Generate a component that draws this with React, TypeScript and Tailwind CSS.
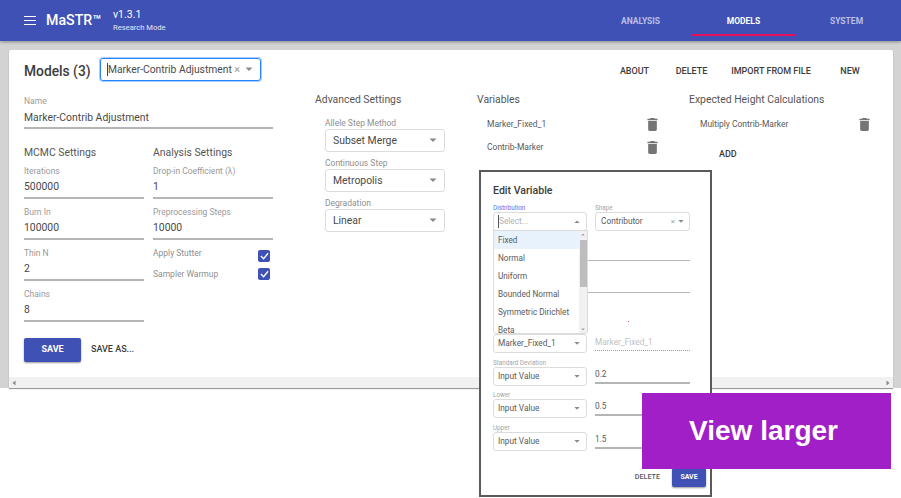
import React from "react";

const Caret = ({ up = false, className = "" }: { up?: boolean; className?: string }) => (
  <svg width="8" height="5" viewBox="0 0 8 5" className={className}>
    <path d={up ? "M0.5 4.5 L4 1 L7.5 4.5 Z" : "M0.5 0.5 L4 4 L7.5 0.5 Z"} fill="#8a8a8a" />
  </svg>
);

const Trash = () => (
  <svg width="11" height="13" viewBox="5 3 14 18" className="shrink-0">
    <path d="M6 19c0 1.1.9 2 2 2h8c1.1 0 2-.9 2-2V7H6v12zM19 4h-3.5l-1-1h-5l-1 1H5v2h14V4z" fill="#757575" />
  </svg>
);

const Field = ({ label, value, className = "" }: { label: string; value: string; className?: string }) => (
  <div className={`flex h-[33px] flex-col border-b-2 border-[#b5b5b5] ${className}`}>
    <span className="text-[8.5px] leading-[11px] text-[#9a9a9a]">{label}</span>
    <span className="mt-[3.5px] text-[10.4px] leading-[14px] text-[#4a4a4a]">{value}</span>
  </div>
);

const AdvSelect = ({ label, value }: { label: string; value: string }) => (
  <div className="mb-[6px] ml-[10px] w-[120px]">
    <div className="text-[8.5px] leading-[11px] text-[#8f8f8f]">{label}</div>
    <div className="flex h-[23px] items-center justify-between rounded-[3px] border border-[#dcdcdc] pl-[7px] pr-[7px] text-[10.4px] text-[#4a4a4a]">
      <span>{value}</span>
      <Caret />
    </div>
  </div>
);

const Check = ({ label, labelClass = "" }: { label: string; labelClass?: string }) => (
  <div className="flex h-[18px] items-center justify-between pr-[3px]">
    <span className={`text-[8.5px] text-[#8f8f8f] ${labelClass}`}>{label}</span>
    <span className="flex h-[12px] w-[12px] items-center justify-center rounded-[2px] bg-[#3f51b5]">
      <svg width="9" height="8" viewBox="0 0 10 8">
        <path d="M1 4 L4 7 L9 1" stroke="white" strokeWidth="1.5" fill="none" />
      </svg>
    </span>
  </div>
);

const ModalSelect = ({ value, muted = false, up = false }: { value: string; muted?: boolean; up?: boolean }) => (
  <div className="flex h-[19px] w-[94px] items-center justify-between rounded-[3px] border border-[#dcdcdc] pl-[4px] pr-[5px] text-[8.3px] text-[#5a5a5a]">
    <span className={muted ? "border-l border-[#555] text-[#b0b0b0]" : ""}>{value}</span>
    <Caret up={up} className="scale-75" />
  </div>
);

const ValueRow = ({ label, value }: { label: string; value: string }) => (
  <div className="mb-[4.5px]">
    <div className="mb-[-1px] text-[6.3px] leading-[10px] text-[#a5a5a5]">{label}</div>
    <div className="flex gap-[8px]">
      <ModalSelect value="Input Value" />
      <div className="flex h-[17px] w-[95px] items-center border-b-2 border-[#b5b5b5] text-[8.3px] text-[#5a5a5a]">{value}</div>
    </div>
  </div>
);

export default function App() {
  return (
    <div className="relative h-[498px] w-[901px] overflow-hidden bg-white font-['Roboto',sans-serif]">
      <div className="h-[388px] bg-[#d3d3d3]">
        <header className="flex h-[41px] items-center bg-[#3f51b5] pl-[24px] shadow-[0_1px_3px_rgba(0,0,0,0.35)]">
          <svg width="12" height="9" viewBox="0 0 12 9" className="mr-[10px]">
            <path d="M0 0.5H12M0 4.5H12M0 8.5H12" stroke="white" strokeWidth="1.2" />
          </svg>
          <span className="w-[67px] text-[14.2px] font-medium text-white">MaSTR™</span>
          <div className="flex flex-col text-white">
            <span className="text-[10.5px] leading-[13px]">v1.3.1</span>
            <span className="mt-[1px] text-[7.6px] leading-[11px] text-[#e3e6f5]">Research Mode</span>
          </div>
          <nav className="ml-auto mr-[3px] flex">
            {["ANALYSIS", "MODELS", "SYSTEM"].map((t) => (
              <div
                key={t}
                className={`flex h-[41px] w-[103px] items-center justify-center pt-[1px] text-[8.5px] font-bold ${
                  t === "MODELS" ? "text-white" : "text-[#b7bfe6]"
                }`}
              >
                <span>{t}</span>
              </div>
            ))}
          </nav>
        </header>

        <main className="mx-[9px] mt-[9px] flex h-[338px] w-[884px] flex-col rounded-t-[2px] bg-white shadow-[0_1px_1px_rgba(0,0,0,0.45)]">
          <div className="flex-1 pl-[15px]">
            <div className="flex h-[46px] items-start pt-[8px]">
              <h1 className="mt-[3px] w-[76px] text-[13.8px] font-medium leading-[20px] text-[#3c3c3c]">Models (3)</h1>
              <div className="flex h-[23px] w-[161px] items-center justify-between rounded-[3px] border border-[#2684ff] pl-[6px] pr-[7px] text-[10.3px] text-[#4a4a4a] shadow-[0_0_0_1px_#a9cdfb]">
                <span className="whitespace-nowrap border-l border-[#444] leading-[13px]">Marker-Contrib Adjustment</span>
                <span className="flex items-center gap-[5px] text-[#9a9a9a]">
                  <span className="text-[11px] leading-none">×</span>
                  <Caret />
                </span>
              </div>
              <div className="ml-auto mt-[7px] flex text-[9px] font-medium leading-[12px] text-[#3c3c3c]">
                <span className="w-[57px] text-center">ABOUT</span>
                <span className="w-[57px] text-center">DELETE</span>
                <span className="w-[102px] text-center">IMPORT FROM FILE</span>
                <span className="mr-[15px] w-[56px] text-center">NEW</span>
              </div>
            </div>

            <div className="flex">
              <section className="w-[249px]">
                <Field label="Name" value="Marker-Contrib Adjustment" />
                <div className="mt-[16px] grid grid-cols-[120px_120px] gap-x-[9px]">
                  <div className="flex flex-col gap-[8px]">
                    <h2 className="mb-[-3.5px] text-[10.4px] leading-[16px] text-[#555]">MCMC Settings</h2>
                    <Field label="Iterations" value="500000" />
                    <Field label="Burn In" value="100000" />
                    <Field label="Thin N" value="2" />
                    <Field label="Chains" value="8" />
                  </div>
                  <div className="flex flex-col gap-[8px]">
                    <h2 className="mb-[-3.5px] text-[10.4px] leading-[16px] text-[#555]">Analysis Settings</h2>
                    <Field label="Drop-in Coefficient (λ)" value="1" />
                    <Field label="Preprocessing Steps" value="10000" />
                    <div className="mt-[-1px]">
                      <Check label="Apply Stutter" labelClass="mb-[5px]" />
                      <Check label="Sampler Warmup" labelClass="mt-[1px]" />
                    </div>
                  </div>
                </div>
                <div className="mt-[16px] flex items-center">
                  <button className="h-[24px] w-[57px] rounded-[2px] bg-[#3f51b5] text-[9px] font-bold text-white shadow-[0_1px_2px_rgba(0,0,0,0.4)]">SAVE</button>
                  <span className="ml-[10px] text-[9px] font-medium text-[#3c3c3c]">SAVE AS...</span>
                </div>
              </section>

              <section className="ml-[42px] mt-[-4px] w-[162px]">
                <h2 className="mb-[10px] text-[10.4px] leading-[16px] text-[#555]">Advanced Settings</h2>
                <AdvSelect label="Allele Step Method" value="Subset Merge" />
                <AdvSelect label="Continuous Step" value="Metropolis" />
                <AdvSelect label="Degradation" value="Linear" />
              </section>

              <section className="mt-[-4px] w-[212px]">
                <h2 className="text-[10.4px] leading-[16px] text-[#555]">Variables</h2>
                <div className="mt-[5px] flex h-[23px] items-center justify-between pl-[10px] pr-[31px] text-[8.5px] text-[#5a5a5a]">
                  <span>Marker_Fixed_1</span>
                  <Trash />
                </div>
                <div className="flex h-[23px] items-center justify-between pl-[10px] pr-[31px] text-[8.5px] text-[#5a5a5a]">
                  <span>Contrib-Marker</span>
                  <Trash />
                </div>
              </section>

              <section className="mt-[-4px] w-[184px]">
                <h2 className="text-[10.4px] leading-[16px] text-[#555]">Expected Height Calculations</h2>
                <div className="mt-[5px] flex h-[23px] items-center justify-between pl-[11px] pr-[3px] text-[8.5px] text-[#5a5a5a]">
                  <span>Multiply Contrib-Marker</span>
                  <Trash />
                </div>
                <div className="ml-[30px] mt-[13px] text-[9px] font-medium leading-[11px] text-[#3c3c3c]">ADD</div>
              </section>
            </div>
          </div>
          <div className="flex h-[11px] items-center justify-between bg-[#f1f1f1] px-[3px]">
            <svg width="4" height="6" viewBox="0 0 4 6"><path d="M3.5 0.5V5.5L0.5 3Z" fill="#888" /></svg>
            <svg width="4" height="6" viewBox="0 0 4 6"><path d="M0.5 0.5V5.5L3.5 3Z" fill="#888" /></svg>
          </div>
        </main>
      </div>

      {/* Edit Variable dialog */}
      <div className="absolute left-[479px] top-[170px] h-[327px] w-[233px] border-2 border-[#5a5a5a] bg-white pl-[12px] pr-[20px]">
        <h3 className="mt-[11px] text-[10.6px] font-medium leading-[15px] text-[#3c3c3c]">Edit Variable</h3>
        <div className="mt-[5px] flex gap-[8px]">
          <div>
            <div className="mb-[-1px] text-[6.3px] leading-[10px] text-[#5c6ff0]">Distribution</div>
            <ModalSelect value="Select..." muted up />
          </div>
          <div>
            <div className="mb-[-1px] text-[6.3px] leading-[10px] text-[#a5a5a5]">Shape</div>
            <div className="flex h-[19px] w-[95px] items-center justify-between rounded-[3px] border border-[#dcdcdc] pl-[5px] pr-[4px] text-[8.3px] text-[#5a5a5a]">
              <span>Contributor</span>
              <span className="flex items-center gap-[2px] text-[#a0a0a0]">
                <span className="text-[8px] leading-none">×</span>
                <Caret className="scale-75" />
              </span>
            </div>
          </div>
        </div>
        <div className="ml-[94px] mt-[29px] h-[1px] w-[103px] bg-[#b5b5b5]" />
        <div className="ml-[94px] mt-[31px] h-[1px] w-[103px] bg-[#b5b5b5]" />
        <div className="ml-[135px] mt-[28px] h-[1px] w-[1px] bg-[#e05050]" />
        <div className="mt-[12px] flex gap-[8px]">
          <ModalSelect value="Marker_Fixed_1" />
          <div className="flex h-[17px] w-[95px] items-center border-b border-dotted border-[#9a9a9a] text-[8.3px] text-[#c0c0c0]">Marker_Fixed_1</div>
        </div>
        <div className="mt-[4.5px]">
          <ValueRow label="Standard Deviation" value="0.2" />
          <ValueRow label="Lower" value="0.5" />
          <ValueRow label="Upper" value="1.5" />
        </div>
        <div className="mr-[-16px] mt-[17px] flex items-center justify-end gap-[12px]">
          <span className="text-[7.2px] font-medium text-[#5a5a5a]">DELETE</span>
          <button className="h-[19px] w-[34px] rounded-[2px] bg-[#3f51b5] text-[7px] font-bold text-white shadow-[0_1px_2px_rgba(0,0,0,0.4)]">SAVE</button>
        </div>
      </div>

      {/* Open distribution menu */}
      <div className="absolute left-[494px] top-[231px] flex h-[102px] w-[93px] overflow-hidden rounded-b-[3px] bg-white text-[8.2px] text-[#5a5a5a] shadow-[0_0_0_1px_#dcdcdc]">
        <ul className="flex-1">
          {["Fixed", "Normal", "Uniform", "Bounded Normal", "Symmetric Dirichlet"].map((o, i) => (
            <li key={o} className={`flex h-[18px] items-center pl-[4px] ${i === 0 ? "bg-[#e8f2fd]" : ""}`}>{o}</li>
          ))}
          <li className="h-[12px] pl-[4px] pt-[4.5px] leading-none">Beta</li>
        </ul>
        <div className="flex w-[8px] flex-col items-center justify-between bg-[#f1f1f1] py-[1px]">
          <Caret up className="scale-50" />
          <div className="absolute right-0 top-[9px] h-[47px] w-[7px] bg-[#bdbdbd]" />
          <Caret className="scale-50" />
        </div>
      </div>

      {/* Models tab indicator */}
      <div className="absolute left-[692px] top-[34px] h-[2px] w-[103px] bg-[#e6105f]" />

      {/* View larger badge */}
      <div className="absolute left-[642px] top-[393px] flex h-[76px] w-[249px] items-center justify-center bg-[#a01fc6] pb-[1px] pr-[6px] font-['Liberation_Sans',sans-serif] text-[28px] font-bold text-white">
        View larger
      </div>
    </div>
  );
}
